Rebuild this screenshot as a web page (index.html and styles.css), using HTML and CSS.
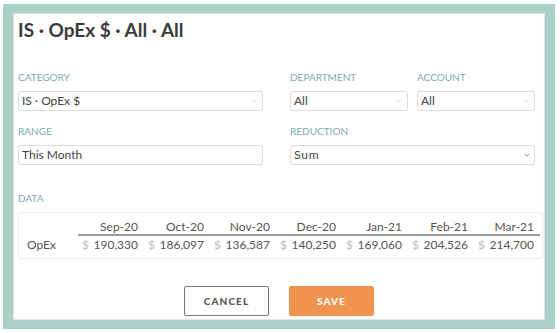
FILE: index.html
```html
<!DOCTYPE html>
<html>
<head>
<meta charset="utf-8">
<link rel="stylesheet" href="styles.css">
</head>
<body>
<div class="frame">
  <div class="panel">
    <h1 class="title">IS · OpEx $ · All · All</h1>
    <div class="row">
      <div class="field wide">
        <div class="label">Category</div>
        <div class="select">IS · OpEx $<svg class="chev" viewBox="0 0 8 5"><polyline points="1,1 4,4 7,1"/></svg></div>
      </div>
      <div class="pair">
        <div class="field">
          <div class="label">Department</div>
          <div class="select">All<svg class="chev" viewBox="0 0 8 5"><polyline points="1,1 4,4 7,1"/></svg></div>
        </div>
        <div class="field">
          <div class="label">Account</div>
          <div class="select">All<svg class="chev" viewBox="0 0 8 5"><polyline points="1,1 4,4 7,1"/></svg></div>
        </div>
      </div>
    </div>
    <div class="row second">
      <div class="field wide">
        <div class="label">Range</div>
        <div class="input">This Month</div>
      </div>
      <div class="field wide">
        <div class="label">Reduction</div>
        <div class="select native">Sum<svg class="chev dark" viewBox="0 0 8 5"><polyline points="1,1 4,4 7,1"/></svg></div>
      </div>
    </div>
    <div class="label data-label">Data</div>
    <div class="data">
      <div class="grid">
        <div class="hcell blank"></div>
        <div class="hcell">Sep-20</div>
        <div class="hcell">Oct-20</div>
        <div class="hcell">Nov-20</div>
        <div class="hcell">Dec-20</div>
        <div class="hcell">Jan-21</div>
        <div class="hcell">Feb-21</div>
        <div class="hcell">Mar-21</div>
        <div class="rlabel">OpEx</div>
        <div class="vcell"><span class="cur">$</span><span>190,330</span></div>
        <div class="vcell"><span class="cur">$</span><span>186,097</span></div>
        <div class="vcell"><span class="cur">$</span><span>136,587</span></div>
        <div class="vcell"><span class="cur">$</span><span>140,250</span></div>
        <div class="vcell"><span class="cur">$</span><span>169,060</span></div>
        <div class="vcell"><span class="cur">$</span><span>204,526</span></div>
        <div class="vcell"><span class="cur">$</span><span>214,700</span></div>
      </div>
    </div>
    <div class="actions">
      <button class="btn cancel">Cancel</button>
      <button class="btn save">Save</button>
    </div>
  </div>
</div>
</body>
</html>
```
FILE: styles.css
```css
* { box-sizing: border-box; }
html, body { margin: 0; padding: 0; background: #fff; }
body { font-family: Lato, "Open Sans", sans-serif; color: #444; }

.frame {
  margin: 4px 5px 0 3px;
  width: 552px;
  height: 325px;
  border: 9px solid #a9d1c8;
  border-left-width: 10px;
  border-right-width: 10px;
}
.panel {
  height: 100%;
  background: #fff;
  box-shadow: inset 0 0 1px 1px #eadcdc;
  padding: 6px 10px 0 5px;
}
.title {
  margin: 0;
  font-size: 19px;
  line-height: 22px;
  font-weight: 700;
  color: #3b3b3b;
}
.row {
  display: flex;
  gap: 27px;
  margin-top: 30px;
}
.row.second { margin-top: 14px; }
.field.wide { width: 245px; }
.pair { display: flex; gap: 9px; width: 245px; }
.pair .field { width: 118px; }
.label {
  font-size: 10px;
  line-height: 12px;
  text-transform: uppercase;
  color: #82a9b9;
  margin-bottom: 8px;
}
.select, .input {
  position: relative;
  height: 20px;
  border: 1px solid #dcdcdc;
  border-radius: 3px;
  font-size: 12px;
  line-height: 18px;
  padding: 0 3px;
  color: #444;
}
.chev {
  position: absolute;
  right: 5px;
  top: 7px;
  width: 6px;
  height: 4px;
  fill: none;
  stroke: #cfcfcf;
  stroke-width: 1;
}
.chev.dark { stroke: #666; right: 4px; }
.select.native { letter-spacing: 0.8px; }

.data-label { margin-top: 27px; }
.data {
  width: 525px;
  height: 47px;
  border: 1px dotted #dddddd;
  border-radius: 3px;
  padding: 6px 2px 0 0;
}
.grid {
  display: grid;
  grid-template-columns: 59px repeat(7, 66px);
  font-size: 12px;
  line-height: 16px;
  color: #555;
}
.hcell {
  text-align: right;
  padding-right: 6px;
  border-bottom: 2px solid #9b9b9b;
  line-height: 15px;
}
.hcell.blank { border-bottom: none; }
.rlabel { padding-left: 8px; padding-top: 1px; }
.vcell {
  display: flex;
  justify-content: space-between;
  padding: 1px 6px 0 4px;
}
.cur { color: #bdbdbd; }

.actions {
  display: flex;
  justify-content: center;
  gap: 20px;
  margin-top: 27px;
  padding-left: 5px;
}
.btn {
  width: 85px;
  height: 30px;
  font-family: Lato, sans-serif;
  font-size: 10px;
  font-weight: 900;
  letter-spacing: 1.1px;
  text-transform: uppercase;
  border-radius: 2px;
  padding: 0;
}
.cancel {
  background: #fff;
  border: 1.5px solid #777;
  color: #555;
}
.save {
  background: #ef934f;
  border: 1px solid #ef934f;
  color: #fff;
}
```
